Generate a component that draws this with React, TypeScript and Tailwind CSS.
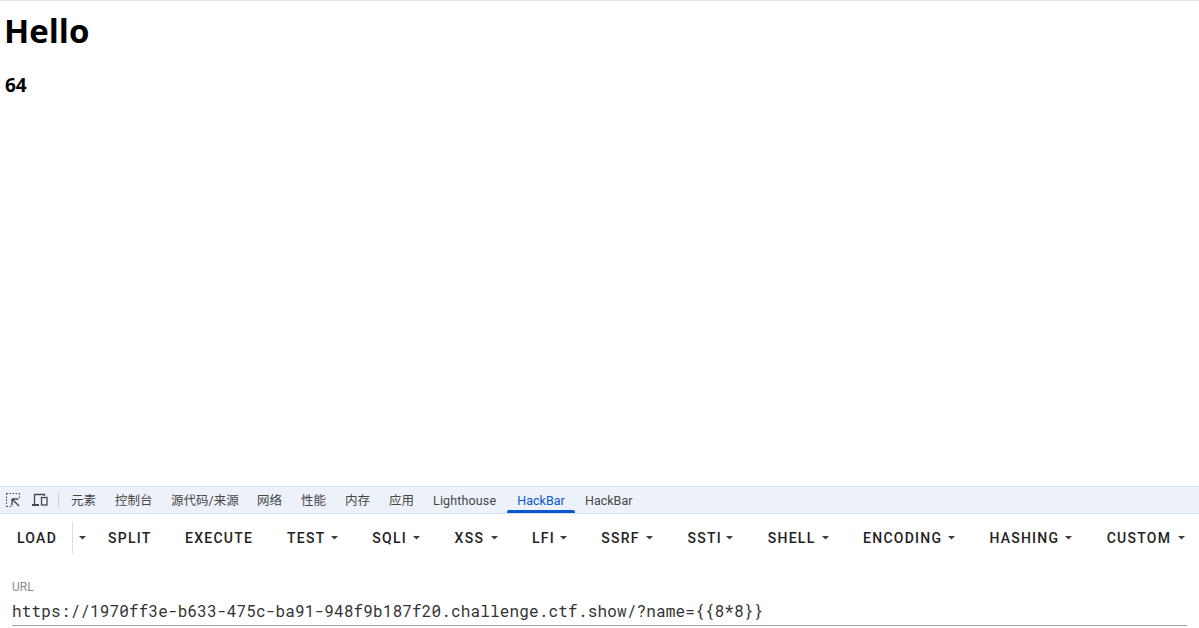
const ROBOTO = "font-['Roboto',sans-serif]";

function Caret() {
  return (
    <svg width="7" height="4" viewBox="0 0 7 4" className="shrink-0">
      <path d="M0 0h7L3.5 3.6z" fill="#3c3c3c" />
    </svg>
  );
}

const menus: [string, string][] = [
  ["TEST", "w-[51px]"],
  ["SQLI", "w-[48px]"],
  ["XSS", "w-[43px]"],
  ["LFI", "w-[35px]"],
  ["SSRF", "w-[52px]"],
  ["SSTI", "w-[46px]"],
  ["SHELL", "w-[61px]"],
  ["ENCODING", "w-[92px]"],
  ["HASHING", "w-[83px]"],
  ["CUSTOM", "w-[78px]"],
];

const tabs: [string, string][] = [
  ["元素", "w-[25px]"],
  ["控制台", "w-[37px] ml-[19px]"],
  ["源代码/来源", "w-[66px] ml-[19px]"],
  ["网络", "w-[25px] ml-[20px]"],
  ["性能", "w-[24px] ml-[19px]"],
  ["内存", "w-[25px] ml-[20px]"],
  ["应用", "w-[25px] ml-[19px]"],
  ["Lighthouse", "w-[63px] ml-[19px] tracking-[0.15px]"],
];

export default function App() {
  return (
    <div className="h-[628px] w-[1199px] flex flex-col overflow-hidden bg-white">
      <main className="flex-1 border-t border-[#e4e4e4] pl-[5px] font-['Open_Sans','Noto_Sans',sans-serif] text-black">
        <h1 className="mt-[8px] -ml-[1px] text-[33px] leading-[44px] font-bold">Hello</h1>
        <h3 className="mt-[19px] text-[19px] leading-[26px] font-bold">64</h3>
      </main>

      <div className="h-[28px] shrink-0 flex items-center bg-[#ecf1fa] border-y border-[#d3e3fd] text-[12.5px] text-[#474747] font-['Roboto','Noto_Sans_CJK_SC',sans-serif]">
        <svg width="16" height="16" viewBox="0 0 16 16" className="ml-[5px] shrink-0" fill="none" stroke="#474747">
          <path d="M1.5 1.5h13M1.5 1.5v13M1.5 14.5h5M14.5 1.5v5" strokeDasharray="1.5 1.5" />
          <path d="M7 7h6.5M7 7v6.5M7 7l7 7" strokeWidth="1.4" />
        </svg>
        <svg width="16" height="14" viewBox="0 0 16 14" className="ml-[11px] shrink-0" fill="none" stroke="#474747">
          <path d="M2.5 11.5V1.5h10V3" strokeWidth="1.3" />
          <path d="M0 12h7" strokeWidth="2" />
          <rect x="9.5" y="4.5" width="5.5" height="7.5" strokeWidth="1.3" />
        </svg>
        <div className="ml-[10px] mr-[12px] w-px h-[16px] bg-[#c7d0e0]" />
        {tabs.map(([t, c]) => (
          <span key={t} className={`${c} pt-[2px] whitespace-nowrap`}>{t}</span>
        ))}
        <span className="relative ml-[11px] w-[68px] h-full pt-[2px] flex items-center justify-center text-[#0b57d0]">
          HackBar
          <span className="absolute left-0 right-0 bottom-0 h-[3px] rounded-t-[2px] bg-[#0b57d0]" />
        </span>
        <span className="ml-[10px] pt-[2px]">HackBar</span>
      </div>

      <div className={`h-[48px] shrink-0 flex items-center pl-[17px] text-[14px] font-medium tracking-[1.25px] text-[#222] ${ROBOTO}`}>
        <span className="w-[55px]">LOAD</span>
        <span className="w-px h-[32px] bg-[#dedede]" />
        <span className="ml-[6px] flex"><Caret /></span>
        <span className="ml-[22px] w-[44px]">SPLIT</span>
        <span className="ml-[33px] w-[68px] whitespace-nowrap">EXECUTE</span>
        <div className="ml-[34px] flex items-center gap-[34.3px]">
          {menus.map(([m, c]) => (
            <span key={m} className={`${c} flex items-center justify-between whitespace-nowrap shrink-0`}>
              {m}
              <Caret />
            </span>
          ))}
        </div>
      </div>

      <div className="h-[66px] shrink-0 px-[12px] pt-[18px]">
        <div className={`text-[12px] leading-[14px] text-[#8a8a8a] ${ROBOTO}`}>URL</div>
        <div className="mt-[7px] h-[25px] border-b border-[#a3a3a3] text-[16px] leading-[19px] text-[#333] tracking-[0.155px] font-['Roboto_Mono','DejaVu_Sans_Mono','Liberation_Mono',monospace] whitespace-nowrap">
          https://1970ff3e-b633-475c-ba91-948f9b187f20.challenge.ctf.show/?name={"{{8*8}}"}
        </div>
      </div>
    </div>
  );
}
